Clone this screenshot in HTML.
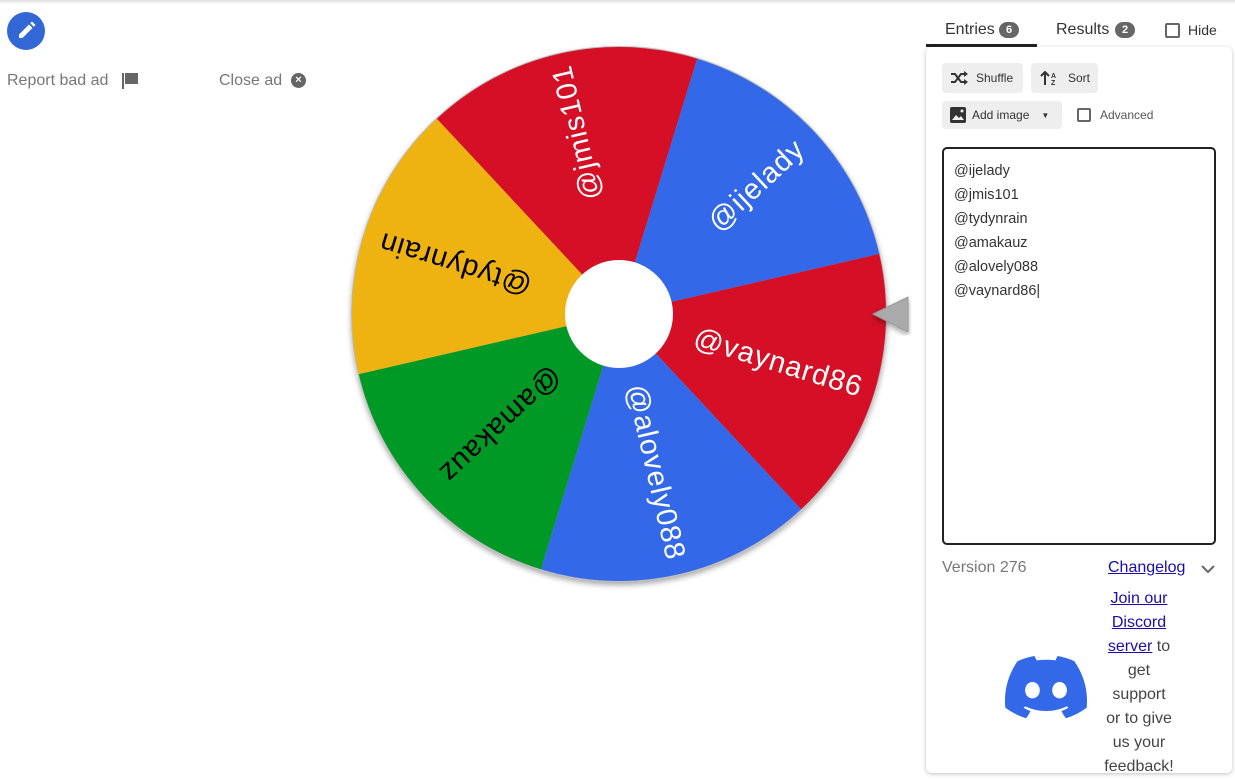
<!DOCTYPE html>
<html><head><meta charset="utf-8"><style>
*{margin:0;padding:0;box-sizing:border-box}
body{width:1235px;height:777px;overflow:hidden;background:#fff;font-family:"Liberation Sans",sans-serif;position:relative;color:#333}
.a{position:absolute}
.topbar{left:0;top:0;width:1235px;height:4px;background:linear-gradient(#ddd,#fff)}
.btn{background:#eee;border-radius:4px;font-size:12px;color:#333;display:flex;align-items:center}
.cb{width:14px;height:14px;border:2px solid #666;border-radius:2px}
a{color:#1a0dab;text-decoration:underline}
.ta div{height:24px}
</style></head><body>
<div class="a topbar"></div>
<div class="a" style="left:7px;top:12px;width:38px;height:38px;border-radius:50%;background:#3367d6">
<svg width="38" height="38" viewBox="0 0 38 38"><path d="M12 26v-3.5l10-10 3.5 3.5-10 10z M23.3 11.2l1.7-1.7 3.5 3.5-1.7 1.7z" fill="#fff"/></svg></div>
<div class="a" style="left:7px;top:72px;font-size:16px;color:#777">Report bad ad</div>
<svg class="a" style="left:121px;top:72px" width="18" height="18"><path d="M1 1h2v16H1z M4 1h13v11H4z" fill="#666"/></svg>
<div class="a" style="left:219px;top:72px;font-size:16px;color:#777">Close ad</div>
<div class="a" style="left:291px;top:73px;width:15px;height:15px;border-radius:50%;background:#666;color:#fff;font-size:11px;text-align:center;line-height:15px;font-weight:bold">×</div>

<svg class="a" style="left:0;top:0" width="920" height="777">
<defs><filter id="s" x="-10%" y="-10%" width="120%" height="120%"><feDropShadow dx="0" dy="3" stdDeviation="3" flood-color="#000" flood-opacity="0.35"/></filter></defs>
<circle cx="619" cy="314" r="268" fill="#bbb" filter="url(#s)"/>
<path d="M619 314L697.1 58.7A267 267 0 0 1 879.2 253.9Z" fill="#3369e8"/>
<path d="M619 314L879.2 253.9A267 267 0 0 1 801.1 509.3Z" fill="#d50f25"/>
<path d="M619 314L801.1 509.3A267 267 0 0 1 540.9 569.3Z" fill="#3369e8"/>
<path d="M619 314L540.9 569.3A267 267 0 0 1 358.8 374.1Z" fill="#009925"/>
<path d="M619 314L358.8 374.1A267 267 0 0 1 436.9 118.7Z" fill="#eeb211"/>
<path d="M619 314L436.9 118.7A267 267 0 0 1 697.1 58.7Z" fill="#d50f25"/>
<g font-family="Liberation Sans, sans-serif" font-size="29" letter-spacing="1" text-anchor="end" dominant-baseline="central">
<text transform="translate(619 314) rotate(-43)" x="248" fill="#fff">@ijelady</text>
<text transform="translate(619 314) rotate(17)" x="254" fill="#fff">@vaynard86</text>
<text transform="translate(619 314) rotate(77)" x="252" fill="#fff">@alovely088</text>
<text transform="translate(619 314) rotate(137)" x="240" fill="#000">@amakauz</text>
<text transform="translate(619 314) rotate(197)" x="250" fill="#000">@tydynrain</text>
<text transform="translate(619 314) rotate(257)" x="255" fill="#fff">@jmis101</text>
</g>
<circle cx="619" cy="314" r="54" fill="#fff"/>
<path d="M873 314L908 297V332Z" fill="#aaa" stroke="#999" filter="url(#s)"/>
</svg>

<div class="a" style="left:945px;top:21px;font-size:16px;color:#333">Entries</div>
<div class="a" style="left:999px;top:22px;width:20px;height:16px;border-radius:8px;background:#666;color:#fff;font-size:11px;text-align:center;line-height:16px;font-weight:bold">6</div>
<div class="a" style="left:926px;top:44px;width:111px;height:3px;background:#222"></div>
<div class="a" style="left:1056px;top:21px;font-size:16px;color:#333">Results</div>
<div class="a" style="left:1115px;top:22px;width:20px;height:16px;border-radius:8px;background:#666;color:#fff;font-size:11px;text-align:center;line-height:16px;font-weight:bold">2</div>
<div class="a cb" style="left:1165px;top:23px;width:15px;height:15px"></div>
<div class="a" style="left:1188px;top:22px;font-size:14px">Hide</div>

<div class="a" style="left:926px;top:47px;width:306px;height:726px;border-radius:6px;box-shadow:0 1px 4px rgba(0,0,0,.25)"></div>
<div class="a btn" style="left:942px;top:63px;width:81px;height:30px;padding-left:8px">
<svg width="18" height="14"><path d="M1 3h4l6 8h4M1 11h4l6-8h4" stroke="#333" stroke-width="2" fill="none"/><path d="M14 0l4 3-4 3zM14 8l4 3-4 3z" fill="#333"/></svg><span style="margin-left:8px">Shuffle</span></div>
<div class="a btn" style="left:1031px;top:63px;width:67px;height:30px;padding-left:9px">
<svg width="18" height="16"><path d="M5 15V3M1 6l4-4 4 4" stroke="#333" stroke-width="2" fill="none"/><text x="11" y="8" font-size="7" font-weight="bold" fill="#333">A</text><text x="11" y="15" font-size="7" font-weight="bold" fill="#333">Z</text></svg><span style="margin-left:10px">Sort</span></div>
<div class="a btn" style="left:942px;top:101px;width:120px;height:28px;padding-left:8px">
<svg width="16" height="16"><rect x="0" y="0" width="16" height="16" rx="2" fill="#333"/><path d="M2 13l4-5 3 3 2-2 3 4z" fill="#eee"/><circle cx="12" cy="4" r="1.5" fill="#eee"/></svg><span style="margin-left:6px">Add image</span><span style="margin-left:12px;font-size:8px">▼</span></div>
<div class="a cb" style="left:1077px;top:108px"></div>
<div class="a" style="left:1100px;top:108px;font-size:12px;color:#555">Advanced</div>

<div class="a ta" style="left:942px;top:147px;width:274px;height:398px;border:2px solid #222;border-radius:5px;padding:10px 0 0 10px;font-size:14.5px;color:#333;line-height:24px">
<div>@ijelady</div><div>@jmis101</div><div>@tydynrain</div><div>@amakauz</div><div>@alovely088</div><div>@vaynard86|</div></div>

<div class="a" style="left:942px;top:559px;font-size:16px;color:#777">Version 276</div>
<div class="a" style="left:1108px;top:559px;font-size:16px"><a>Changelog</a></div>
<svg class="a" style="left:1200px;top:563px" width="16" height="12"><path d="M2 3l6 6 6-6" stroke="#666" stroke-width="2" fill="none"/></svg>
<div class="a" style="left:1104px;top:587px;width:70px;text-align:center;font-size:16px;line-height:24px;color:#444"><a>Join our Discord server</a> to get support or to give us your feedback!</div>
<svg class="a" style="left:1005px;top:655px" width="82" height="64" viewBox="0 0 127 96"><path fill="#3369e8" d="M107.7 8.1A105 105 0 0 0 81.5 0a72 72 0 0 0-3.4 6.8 97.7 97.7 0 0 0-29.1 0A72 72 0 0 0 45.6 0a105.9 105.9 0 0 0-26.3 8.1C2.8 32.6-1.700 56.6.5 80.2a105.7 105.7 0 0 0 32.2 16.2 77.7 77.7 0 0 0 6.9-11.1 68.4 68.4 0 0 1-10.8-5.2c.9-.7 1.8-1.4 2.6-2.1a75.6 75.6 0 0 0 64.3 0c.9.7 1.7 1.4 2.6 2.1a68.7 68.7 0 0 1-10.9 5.2 77 77 0 0 0 6.9 11.1 105.300 105.300 0 0 0 32.2-16.2c2.6-27.3-4.6-51.1-19.1-72.1zM42.5 65.7c-6.3 0-11.4-5.7-11.4-12.7s5-12.8 11.4-12.8S54 45.9 53.9 53c0 7-5 12.7-11.4 12.7zm42 0c-6.3 0-11.4-5.7-11.4-12.7s5-12.8 11.4-12.8S96 45.9 95.9 53c0 7-5 12.7-11.4 12.7z"/></svg>
</body></html>
